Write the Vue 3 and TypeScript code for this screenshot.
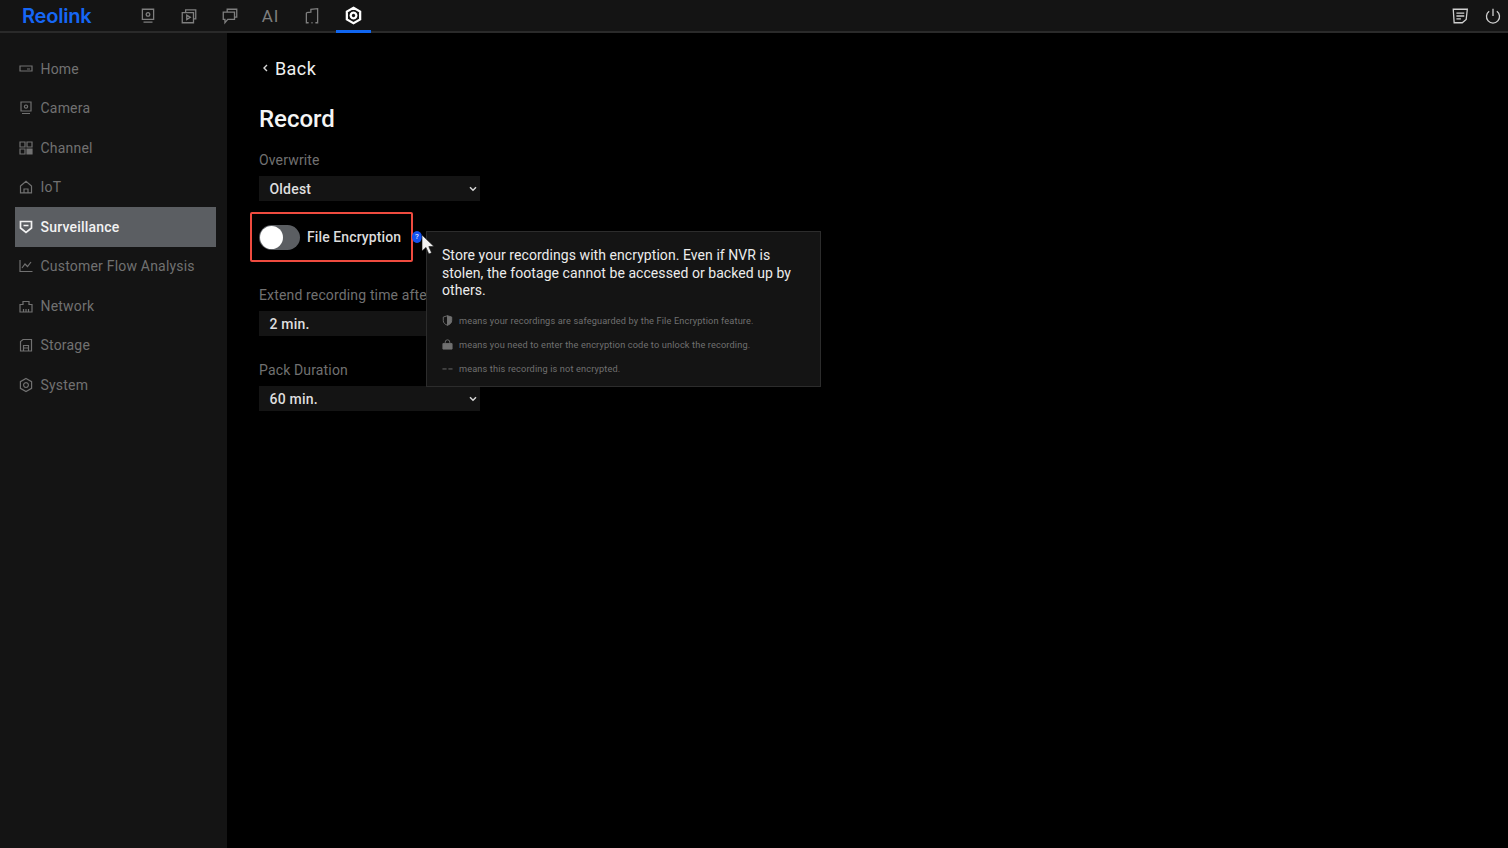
<script setup lang="ts">
interface NavItem {
  label: string;
  icon: string;
  active?: boolean;
}

const topIcons = ["camera", "playback", "chat", "ai", "files", "settings"];

const navItems: NavItem[] = [
  { label: "Home", icon: "home" },
  { label: "Camera", icon: "camera" },
  { label: "Channel", icon: "channel" },
  { label: "IoT", icon: "iot" },
  { label: "Surveillance", icon: "shield", active: true },
  { label: "Customer Flow Analysis", icon: "chart" },
  { label: "Network", icon: "network" },
  { label: "Storage", icon: "storage" },
  { label: "System", icon: "settings" },
];

// stroke paths on a 16x16 grid
const paths: Record<string, string> = {
  home: "M2 5h12v5H2z M9 8h3",
  camera: "M3 2h10v9H3z M4 13.5h8 M8 5a1.6 1.6 0 1 0 .01 0",
  playback: "M5 5V2.5h9v8h-2 M2 5h10v9H2z M6 7.2v4l3.2-2z",
  chat: "M5.5 4.5V2h8.5v7h-2 M2 4.5h10V11H6l-2.5 3v-3H2z",
  files: "M3 5l4-.5V2l6-.5V14h-2 M3 5v9h2 M7.5 14h1",
  channel:
    "M2 2h5v5H2z M9 2h5v5H9z M2 9h5v5H2z M9 9h5v5H9z M10 10h3v3h-3z M11 11h1v1h-1z",
  iot: "M2.5 7L8 2.2 13.5 7v6.8h-11z M6 13.5V10h4v3.5",
  shield: "M2.5 2.5h11v6.5L8 13.5 2.5 9z M5.5 6.5h5",
  chart: "M2 2v11.5h12.5 M4 10l3-4 2.5 2.5L13 4",
  network: "M2 6.5h3V3.5h6v3h3V14H2z M5.5 14v-3 M8 14v-3 M10.5 14v-3",
  storage: "M2.5 14V4.5L5 2.5h8.5V14z M5.5 14V8.5h5V14 M5.5 11h5",
  settings: "M8 1.5l5.6 3.2v6.6L8 14.5l-5.6-3.2V4.7z M8 5.6a2.4 2.4 0 1 0 .01 0",
};
</script>

<template>
  <div class="app">
    <header class="topbar">
      <div class="logo">Reolink</div>
      <nav class="top-nav">
        <div
          v-for="name in topIcons"
          :key="name"
          class="top-item"
          :class="{ current: name === 'settings' }"
        >
          <span v-if="name === 'ai'" class="ai-label">AI</span>
          <svg v-else class="top-icon" viewBox="0 0 16 16">
            <path :d="paths[name]" />
          </svg>
        </div>
      </nav>
      <div class="top-right">
        <svg class="top-icon light" viewBox="0 0 16 16">
          <path d="M2 2h12.5l-1 9-3.5 3H2.8z M4.8 5.5h7 M4.8 8h7 M4.8 10.5h4" />
        </svg>
        <svg class="top-icon light" viewBox="0 0 16 16">
          <path d="M8 1.5v6.5 M4.6 3.8a5.8 5.8 0 1 0 6.8 0" />
        </svg>
      </div>
    </header>

    <div class="body">
      <aside class="sidebar">
        <div
          v-for="item in navItems"
          :key="item.label"
          class="side-item"
          :class="{ active: item.active }"
        >
          <svg class="side-icon" viewBox="0 0 16 16">
            <path :d="paths[item.icon]" />
          </svg>
          <span>{{ item.label }}</span>
        </div>
      </aside>

      <main class="content">
        <div class="back">
          <svg class="back-arrow" viewBox="0 0 6 8"><path d="M4.5 1L1.5 4l3 3" /></svg>
          <span>Back</span>
        </div>
        <h1 class="title">Record</h1>

        <label class="field-label">Overwrite</label>
        <div class="select">
          <span>Oldest</span>
          <svg class="chevron" viewBox="0 0 8 6"><path d="M1 1.2l3 3 3-3" /></svg>
        </div>

        <div class="toggle-row">
          <div class="toggle-box">
            <div class="toggle"><div class="knob"></div></div>
            <span class="toggle-label">File Encryption</span>
          </div>
          <span class="help">?</span>

          <div class="tooltip">
            <p class="tip-main">
              Store your recordings with encryption. Even if NVR is stolen, the footage cannot be
              accessed or backed up by others.
            </p>
            <div class="tip-row">
              <svg class="tip-icon" viewBox="0 0 12 12">
                <path class="filled" d="M6 .8l4.6 1.4v4c0 2.4-2 4.2-4.6 5z" />
                <path d="M6 .8L1.4 2.2v4c0 2.4 2 4.2 4.6 5z" />
              </svg>
              <span>means your recordings are safeguarded by the File Encryption feature.</span>
            </div>
            <div class="tip-row">
              <svg class="tip-icon" viewBox="0 0 12 12">
                <path d="M3.5 5V3.4a2.5 2.5 0 0 1 5 0V5" />
                <path class="filled" d="M1 5h10v6H1z" />
              </svg>
              <span>means you need to enter the encryption code to unlock the recording.</span>
            </div>
            <div class="tip-row">
              <svg class="tip-icon" viewBox="0 0 12 12">
                <path d="M0.5 6.5h4.5 M7 6.5h4.5" />
              </svg>
              <span>means this recording is not encrypted.</span>
            </div>
          </div>

          <svg class="cursor" viewBox="0 0 14 22">
            <path d="M1 1v16l4-3.6L7.8 20l2.8-1.2-2.8-6.2H13z" />
          </svg>
        </div>

        <label class="field-label extend">Extend recording time afte</label>
        <div class="select">
          <span>2 min.</span>
          <svg class="chevron" viewBox="0 0 8 6"><path d="M1 1.2l3 3 3-3" /></svg>
        </div>

        <label class="field-label pack">Pack Duration</label>
        <div class="select">
          <span>60 min.</span>
          <svg class="chevron" viewBox="0 0 8 6"><path d="M1 1.2l3 3 3-3" /></svg>
        </div>
      </main>
    </div>
  </div>
</template>

<style>
html,
body {
  margin: 0;
  background: #000;
}
</style>

<style scoped>
.app {
  width: 1508px;
  height: 848px;
  display: flex;
  flex-direction: column;
  overflow: hidden;
  background: #000;
  font-family: Roboto, "Liberation Sans", sans-serif;
  color: #fff;
}

.topbar {
  height: 31px;
  flex: none;
  display: flex;
  align-items: center;
  background: #141414;
  border-bottom: 2px solid #2a2a2a;
}

.logo {
  width: 127px;
  padding-left: 22px;
  box-sizing: border-box;
  font-family: Inter, sans-serif;
  font-size: 20px;
  font-weight: 600;
  letter-spacing: -0.2px;
  color: #1667f5;
}

.top-nav {
  display: flex;
  height: 100%;
}

.top-item {
  position: relative;
  width: 41px;
  display: flex;
  align-items: center;
  justify-content: center;
  color: #7e7e7e;
}

.top-item.current {
  width: 35px;
  margin-left: 4px;
  color: #fff;
}

.top-item.current::after {
  content: "";
  position: absolute;
  left: 0;
  right: 0;
  bottom: -2px;
  height: 3px;
  background: #1066f0;
}

.ai-label {
  font-size: 17px;
  font-weight: 400;
  letter-spacing: 0.8px;
}

.top-icon {
  width: 18px;
  height: 18px;
  fill: none;
  stroke: currentColor;
  stroke-width: 1.15;
}

.top-item.current .top-icon {
  width: 19px;
  height: 19px;
  stroke-width: 1.9;
}

.top-right {
  margin-left: auto;
  display: flex;
  gap: 15px;
  padding-right: 6px;
  color: #d0d0d0;
}

.body {
  flex: 1;
  display: flex;
  min-height: 0;
}

.sidebar {
  width: 227px;
  flex: none;
  box-sizing: border-box;
  padding: 16px 11px 0 15px;
  background: #141414;
}

.side-item {
  height: 39.5px;
  display: flex;
  align-items: center;
  gap: 6.5px;
  padding-left: 3px;
  font-size: 14px;
  letter-spacing: 0.2px;
  color: #717171;
}

.side-item.active {
  background: #5b5e62;
  color: #f2f2f2;
  font-weight: 500;
}

.side-icon {
  width: 16px;
  height: 16px;
  fill: none;
  stroke: currentColor;
  stroke-width: 1.2;
  flex: none;
}

.side-item.active .side-icon {
  stroke-width: 1.7;
}

.content {
  flex: 1;
  padding: 23px 0 0 32px;
  display: flex;
  flex-direction: column;
  align-items: flex-start;
}

.back {
  display: flex;
  align-items: center;
  height: 24px;
  gap: 6px;
  padding-left: 3px;
  font-size: 18px;
  letter-spacing: 0.4px;
  color: #f0f0f0;
}

.back-arrow {
  width: 7px;
  height: 8px;
  fill: none;
  stroke: #d8d8d8;
  stroke-width: 1.4;
}

.title {
  margin: 24px 0 0;
  font-size: 24px;
  line-height: 30px;
  font-weight: 500;
  color: #f5f5f5;
}

.field-label {
  margin-top: 17px;
  font-size: 14px;
  line-height: 18px;
  letter-spacing: 0.15px;
  color: #717171;
}

.field-label.extend {
  margin-top: 24px;
  white-space: nowrap;
}

.field-label.pack {
  margin-top: 25px;
}

.select {
  width: 221px;
  height: 25px;
  margin-top: 7px;
  box-sizing: border-box;
  padding: 0 3px 0 10.5px;
  display: flex;
  align-items: center;
  justify-content: space-between;
  background: #141414;
  font-size: 14px;
  font-weight: 500;
  letter-spacing: 0.2px;
  color: #dedede;
}

.chevron {
  width: 8px;
  height: 6px;
  fill: none;
  stroke: #d8d8d8;
  stroke-width: 1.5;
}

.toggle-row {
  position: relative;
  margin: 11px 0 0 -9px;
  display: flex;
  align-items: center;
  z-index: 1;
}

.toggle-box {
  width: 163px;
  height: 50px;
  box-sizing: border-box;
  padding-left: 7px;
  display: flex;
  align-items: center;
  gap: 7px;
  border: 2px solid #ef4b3f;
  border-radius: 2px;
}

.toggle {
  width: 41px;
  height: 25px;
  flex: none;
  border-radius: 13px;
  background: #5b5e62;
}

.knob {
  width: 23px;
  height: 23px;
  margin: 1px;
  border-radius: 50%;
  background: #fff;
}

.toggle-label {
  font-size: 14px;
  font-weight: 500;
  letter-spacing: 0.1px;
  color: #dcdcdc;
  white-space: nowrap;
}

.help {
  width: 10px;
  height: 12px;
  margin-left: -1px;
  border-radius: 50%;
  background: #1252f0;
  color: #fff;
  font-size: 8px;
  line-height: 12px;
  text-align: center;
}

.tooltip {
  position: absolute;
  left: 176px;
  top: 19px;
  width: 395px;
  height: 156px;
  box-sizing: border-box;
  padding: 15px 15px;
  background: #141414;
  border: 1px solid #2c2c2c;
}

.tip-main {
  margin: 0 0 9px;
  font-size: 14px;
  line-height: 17.5px;
  letter-spacing: 0.06px;
  color: #ececec;
}

.tip-row {
  height: 24px;
  display: flex;
  align-items: center;
  gap: 6px;
  font-size: 9.2px;
  letter-spacing: 0.14px;
  color: #707070;
}

.tip-icon {
  width: 11px;
  height: 11px;
  flex: none;
  fill: none;
  stroke: #707070;
  stroke-width: 1;
}

.tip-icon .filled {
  fill: #707070;
}

.cursor {
  position: absolute;
  left: 171px;
  top: 22px;
  width: 14px;
  height: 22px;
  z-index: 2;
  fill: #f2f2f2;
  stroke: #111;
  stroke-width: 0.6;
}
</style>
